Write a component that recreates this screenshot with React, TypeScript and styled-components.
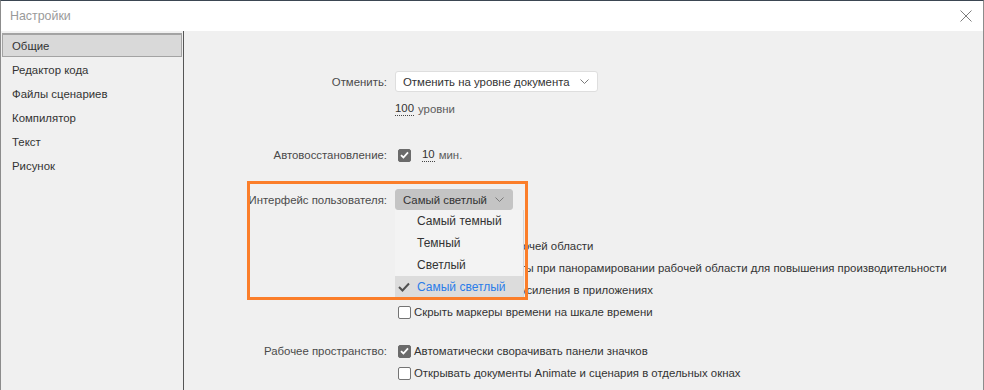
import React from 'react';
import styled, { createGlobalStyle } from 'styled-components';

const GlobalStyle = createGlobalStyle`
    html, body {
        margin: 0;
        padding: 0;
        background: #f0f0f0;
    }
    body {
        font-family: "Liberation Sans", Arial, sans-serif;
        font-size: 11.4px;
        color: #333;
    }
`;

interface IRowProps {
    h: number;
    mt?: number;
}

interface ICheckProps {
    checked?: boolean;
}

const Window = styled.div`
    position: relative;
    width: 984px;
    height: 390px;
    box-sizing: border-box;
    display: flex;
    flex-direction: column;
    overflow: hidden;
    background: #f0f0f0;
    border-top: 1px solid #3b4652;
    border-left: 1px solid #8c8c8c;
    border-right: 1px solid #8c8c8c;
`;

const TitleBar = styled.div`
    height: 30px;
    flex: none;
    display: flex;
    align-items: center;
    justify-content: space-between;
    padding: 0 11px 0 9px;
    background: #fff;
`;

const Title = styled.span`
    font-size: 12.4px;
    color: #9a9a9a;
`;

const Body = styled.div`
    flex: 1;
    display: flex;
    min-height: 0;
`;

const Sidebar = styled.ul`
    width: 182px;
    flex: none;
    margin: 0;
    padding: 2px 0 0;
    list-style: none;
    border-right: 1px solid #555;
`;

const NavItem = styled.li<{ active?: boolean }>`
    height: 24px;
    box-sizing: border-box;
    display: flex;
    align-items: center;
    padding: 1px 0 0 9px;
    margin: 0 1px;
    color: #333;
    background: ${p => (p.active ? '#d9d9d9' : 'transparent')};
    border: 1px solid ${p => (p.active ? '#a3a3a3' : 'transparent')};
    border-top-width: ${p => (p.active ? '2px' : '1px')};
`;

const Main = styled.div`
    position: relative;
    flex: 1;
    padding-top: 40px;
`;

const Row = styled.div<IRowProps>`
    display: grid;
    grid-template-columns: 203px 1fr;
    column-gap: 8px;
    align-items: center;
    height: ${p => p.h}px;
    margin-top: ${p => p.mt || 0}px;
`;

const Label = styled.span`
    text-align: right;
    color: #4a4a4a;
    white-space: nowrap;
`;

const Select = styled.div<{ width: number; open?: boolean }>`
    width: ${p => p.width}px;
    height: 21px;
    box-sizing: border-box;
    display: flex;
    align-items: center;
    justify-content: space-between;
    padding: 0 8px 0 7px;
    border-radius: 3px;
    color: #333;
    background: ${p => (p.open ? '#c4c4c4' : '#fff')};
    border: 1px solid ${p => (p.open ? '#c4c4c4' : '#dedede')};
`;

const Value = styled.span<{ gap?: number }>`
    color: #333;
    margin-left: ${p => p.gap || 0}px;
    border-bottom: 1px dotted #444;
    line-height: 13px;
`;

const Unit = styled.span`
    color: #5c5c5c;
    margin-left: 4px;
`;

const Inline = styled.div`
    display: flex;
    align-items: center;
    white-space: nowrap;
`;

const Box = styled.span<ICheckProps>`
    width: 13px;
    height: 13px;
    box-sizing: border-box;
    flex: none;
    display: inline-flex;
    align-items: center;
    justify-content: center;
    margin: 0 3px 0 3px;
    border-radius: 2px;
    background: ${p => (p.checked ? '#6b6b6b' : '#fff')};
    border: 1px solid ${p => (p.checked ? '#6b6b6b' : '#747474')};
`;

const CheckText = styled.span`
    color: #333;
`;

const Highlight = styled.div`
    position: absolute;
    left: 63px;
    top: 150px;
    width: 281px;
    height: 119px;
    box-sizing: border-box;
    border: 3px solid #fb7e2a;
    pointer-events: none;
`;

const Menu = styled.ul`
    position: absolute;
    left: 211px;
    top: 179px;
    width: 129px;
    box-sizing: border-box;
    margin: 0;
    padding: 0;
    list-style: none;
    background: #f3f3f3;
    border-right: 1px solid #d6d6d6;
`;

const MenuItem = styled.li<{ selected?: boolean }>`
    height: 22px;
    display: flex;
    align-items: center;
    padding-left: 22px;
    position: relative;
    font-size: 12px;
    color: ${p => (p.selected ? '#2b7de9' : '#333')};
    background: ${p => (p.selected ? '#dcdcdc' : 'transparent')};
`;

const Tick = styled.svg`
    position: absolute;
    left: 3px;
    top: 6px;
`;

const Chevron = () => (
    <svg width="9" height="5" viewBox="0 0 9 5">
        <path d="M0.5 0.5 L4.5 4.5 L8.5 0.5" fill="none" stroke="#7a7a7a" strokeWidth="1" />
    </svg>
);

const Check: React.FC<ICheckProps> = ({ checked }) => (
    <Box checked={checked}>
        {checked && (
            <svg width="9" height="8" viewBox="0 0 9 8">
                <path d="M1 4.2 L3.4 6.5 L8 1.3" fill="none" stroke="#fff" strokeWidth="1.8" />
            </svg>
        )}
    </Box>
);

const navItems = ['Общие', 'Редактор кода', 'Файлы сценариев', 'Компилятор', 'Текст', 'Рисунок'];

const themes = ['Самый темный', 'Темный', 'Светлый', 'Самый светлый'];

// the first three rows are mostly hidden under the open theme menu
const options = [
    { text: 'Показать контур рабочей области', checked: false },
    { text: 'Скрывать все объекты при панорамировании рабочей области для повышения производительности', checked: false },
    { text: 'Включить эффекты усиления в приложениях', checked: false },
    { text: 'Скрыть маркеры времени на шкале времени', checked: false },
];

export default function App() {
    return (
        <>
            <GlobalStyle />
            <Window>
                <TitleBar>
                    <Title>Настройки</Title>
                    <svg width="12" height="12" viewBox="0 0 12 12">
                        <path d="M0.5 0.5 L11.5 11.5 M11.5 0.5 L0.5 11.5" stroke="#7d7d7d" strokeWidth="1" />
                    </svg>
                </TitleBar>
                <Body>
                    <Sidebar>
                        {navItems.map((item, i) => (
                            <NavItem key={item} active={i === 0}>
                                {item}
                            </NavItem>
                        ))}
                    </Sidebar>
                    <Main>
                        <Row h={21}>
                            <Label>Отменить:</Label>
                            <Select width={203}>
                                Отменить на уровне документа
                                <Chevron />
                            </Select>
                        </Row>
                        <Row h={16} mt={9}>
                            <span />
                            <Inline>
                                <Value>100</Value>
                                <Unit>уровни</Unit>
                            </Inline>
                        </Row>
                        <Row h={16} mt={30}>
                            <Label>Автовосстановление:</Label>
                            <Inline>
                                <Check checked />
                                <Value gap={8}>10</Value>
                                <Unit>мин.</Unit>
                            </Inline>
                        </Row>
                        <Row h={21} mt={26}>
                            <Label>Интерфейс пользователя:</Label>
                            <Select width={118} open>
                                Самый светлый
                                <Chevron />
                            </Select>
                        </Row>
                        {options.map((o, i) => (
                            <Row key={o.text} h={22} mt={i === 0 ? 25 : 0}>
                                <span />
                                <Inline>
                                    <Check checked={o.checked} />
                                    <CheckText>{o.text}</CheckText>
                                </Inline>
                            </Row>
                        ))}
                        <Row h={22} mt={17}>
                            <Label>Рабочее пространство:</Label>
                            <Inline>
                                <Check checked />
                                <CheckText>Автоматически сворачивать панели значков</CheckText>
                            </Inline>
                        </Row>
                        <Row h={22}>
                            <span />
                            <Inline>
                                <Check />
                                <CheckText>Открывать документы Animate и сценария в отдельных окнах</CheckText>
                            </Inline>
                        </Row>
                        <Menu>
                            {themes.map((t, i) => (
                                <MenuItem key={t} selected={i === themes.length - 1}>
                                    {i === themes.length - 1 && (
                                        <Tick width="12" height="10" viewBox="0 0 12 10">
                                            <path d="M1 5 L4.5 8.5 L11 1.5" fill="none" stroke="#505050" strokeWidth="2" />
                                        </Tick>
                                    )}
                                    {t}
                                </MenuItem>
                            ))}
                        </Menu>
                        <Highlight />
                    </Main>
                </Body>
            </Window>
        </>
    );
}
